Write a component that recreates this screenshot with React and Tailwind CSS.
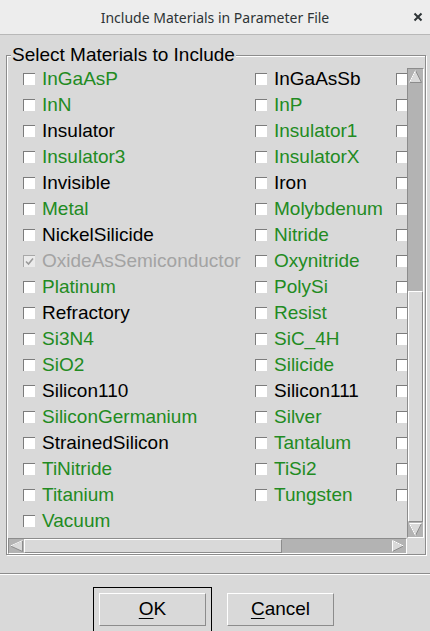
import React from "react";

const rows = [
  [["InGaAsP", "g"], ["InGaAsSb", "b"], true],
  [["InN", "g"], ["InP", "g"], true],
  [["Insulator", "b"], ["Insulator1", "g"], true],
  [["Insulator3", "g"], ["InsulatorX", "g"], true],
  [["Invisible", "b"], ["Iron", "b"], true],
  [["Metal", "g"], ["Molybdenum", "g"], true],
  [["NickelSilicide", "b"], ["Nitride", "g"], true],
  [["OxideAsSemiconductor", "d"], ["Oxynitride", "g"], true],
  [["Platinum", "g"], ["PolySi", "g"], true],
  [["Refractory", "b"], ["Resist", "g"], true],
  [["Si3N4", "g"], ["SiC_4H", "g"], true],
  [["SiO2", "g"], ["Silicide", "g"], true],
  [["Silicon110", "b"], ["Silicon111", "b"], true],
  [["SiliconGermanium", "g"], ["Silver", "g"], true],
  [["StrainedSilicon", "b"], ["Tantalum", "g"], true],
  [["TiNitride", "g"], ["TiSi2", "g"], true],
  [["Titanium", "g"], ["Tungsten", "g"], true],
  [["Vacuum", "g"], null, false],
];

const colors = {
  g: "text-[#228b22]",
  b: "text-black",
  d: "text-[#a3a3a3]",
};

function Box({ disabled }) {
  if (disabled) {
    return (
      <span className="w-[12px] h-[12px] shrink-0 bg-[#ebebeb] border-t border-l border-[#a8a8a8] flex items-center justify-center">
        <svg width="9" height="9" viewBox="0 0 9 9">
          <polyline points="1,4.5 3.5,7 8,1.5" fill="none" stroke="#9a9a9a" strokeWidth="1.6" />
        </svg>
      </span>
    );
  }
  return <span className="w-[12px] h-[12px] shrink-0 bg-white border-t border-l border-[#7c7c7c]" />;
}

function Item({ item }) {
  if (!item) return null;
  const [name, c] = item;
  return (
    <div className="flex items-center">
      <Box disabled={c === "d"} />
      <span className={`ml-[7px] whitespace-nowrap ${colors[c]}`}>{name}</span>
    </div>
  );
}

function Arrow({ dir }) {
  const pts = {
    up: "7.5,1.5 13.5,13.5 1.5,13.5",
    down: "1.5,1.5 13.5,1.5 7.5,13.5",
    left: "1.5,7 13.5,1.5 13.5,12.5",
    right: "1.5,1.5 1.5,12.5 12.5,7",
  }[dir];
  return (
    <svg width="15" height="15" viewBox="0 0 15 15" className="block">
      <polygon points={pts} fill="#d9d9d9" stroke="#8c8c8c" strokeWidth="1" />
      {dir === "up" && <polyline points="1.5,13.5 7.5,1.5" fill="none" stroke="#fff" />}
      {dir === "down" && <polyline points="7.5,13.5 1.5,1.5 13.5,1.5" fill="none" stroke="#fff" />}
      {dir === "left" && <polyline points="13.5,1.5 1.5,7" fill="none" stroke="#fff" />}
      {dir === "right" && <polyline points="12.5,7 1.5,1.5 1.5,12.5" fill="none" stroke="#fff" />}
    </svg>
  );
}

function Button({ label, rest, isDefault }) {
  const inner = (
    <div className="w-[107px] h-[33px] bg-[#d9d9d9] border border-t-white border-l-white border-r-[#8c8c8c] border-b-[#8c8c8c] flex items-center justify-center text-[19px] text-black">
      <span>
        <span className="underline underline-offset-[3px]">{label}</span>
        {rest}
      </span>
    </div>
  );
  if (isDefault) {
    return <div className="border border-black p-[5px]">{inner}</div>;
  }
  return <div className="mt-[6px]">{inner}</div>;
}

export default function App() {
  return (
    <div className="w-[430px] h-[631px] bg-[#d9d9d9] overflow-hidden font-['Liberation_Sans',Arial,sans-serif]">
      <div className="relative h-[35px] bg-[#ededed] border-b border-[#b8b8b8] flex items-center justify-center font-['Noto_Sans',sans-serif] text-[14px] text-[#2e3436]">
        Include Materials in Parameter File
        <svg width="10" height="10" viewBox="0 0 10 10" className="absolute right-[7px] top-[12px]">
          <path d="M1.5 1.5 L8.5 8.5 M8.5 1.5 L1.5 8.5" stroke="#2e3436" strokeWidth="2" />
        </svg>
      </div>

      <div className="relative mt-[20px] ml-[6px] w-[420px] h-[500px] border border-[#8c8c8c] shadow-[1px_1px_0_#fff,inset_1px_1px_0_#fff] pl-px pr-px pt-[10px] flex flex-col">
        <span className="absolute left-[4px] top-[-12px] px-px bg-[#d9d9d9] text-[19px] leading-[22px] text-black">
          Select Materials to Include
        </span>

        <div className="flex h-[472px]">
          <div className="w-[399px] overflow-hidden text-[19px]">
            {rows.map(([a, b, third], i) => (
              <div key={i} className="flex h-[26px] items-center pl-[15px]">
                <div className="w-[232px] shrink-0">
                  <Item item={a} />
                </div>
                <div className="w-[141px] shrink-0">
                  <Item item={b} />
                </div>
                {third && <Box />}
              </div>
            ))}
          </div>
          <div className="w-[17px] h-[470px] mt-[2px] flex flex-col border border-t-[#8c8c8c] border-l-[#8c8c8c] border-b-white border-r-white bg-[#b3b3b3]">
            <Arrow dir="up" />
            <div className="h-[207px]" />
            <div className="h-[231px] bg-[#d9d9d9] border border-t-white border-l-white border-r-[#8c8c8c] border-b-[#8c8c8c]" />
            <Arrow dir="down" />
          </div>
        </div>

        <div className="flex h-[16px]">
          <div className="w-[399px] h-[16px] flex border border-t-[#8c8c8c] border-l-[#8c8c8c] border-b-white border-r-white bg-[#b3b3b3]">
            <Arrow dir="left" />
            <div className="w-[258px] bg-[#d9d9d9] border border-t-white border-l-white border-r-[#8c8c8c] border-b-[#8c8c8c]" />
            <div className="flex-1" />
            <Arrow dir="right" />
          </div>
        </div>
      </div>

      <div className="mt-[18px] h-[2px] border-t border-[#8c8c8c] border-b border-b-white" />

      <div className="mt-[12px] flex items-start pl-[93px] gap-[15px]">
        <Button label="O" rest="K" isDefault />
        <Button label="C" rest="ancel" />
      </div>
    </div>
  );
}
